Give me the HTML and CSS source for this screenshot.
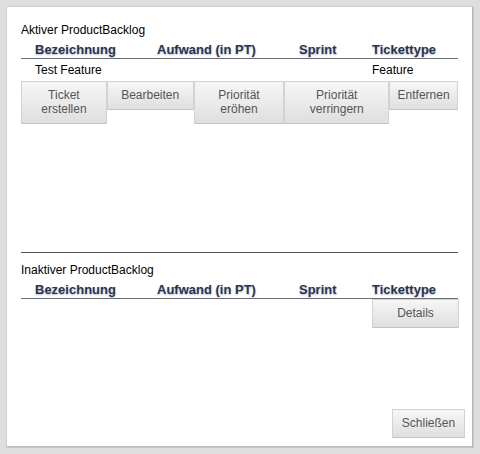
FILE: index.html
```html
<!DOCTYPE html>
<html>
<head>
<meta charset="utf-8">
<link rel="stylesheet" href="styles.css">
</head>
<body>
<div class="panel">
  <section class="backlog active">
    <div class="title">Aktiver ProductBacklog</div>
    <div class="grid head">
      <div>Bezeichnung</div><div>Aufwand (in PT)</div><div>Sprint</div><div>Tickettype</div>
    </div>
    <div class="grid row">
      <div>Test Feature</div><div></div><div></div><div>Feature</div>
    </div>
    <div class="actions">
      <button class="btn w1">Ticket erstellen</button>
      <button class="btn w2">Bearbeiten</button>
      <button class="btn w3">Priorität eröhen</button>
      <button class="btn w4">Priorität verringern</button>
      <button class="btn w5">Entfernen</button>
    </div>
  </section>
  <hr class="divider">
  <section class="backlog inactive">
    <div class="title">Inaktiver ProductBacklog</div>
    <div class="grid head">
      <div>Bezeichnung</div><div>Aufwand (in PT)</div><div>Sprint</div><div>Tickettype</div>
    </div>
    <div class="details-row">
      <button class="btn details">Details</button>
    </div>
  </section>
  <div class="footer">
    <button class="btn close">Schließen</button>
  </div>
</div>
</body>
</html>
```
FILE: styles.css
```css
html, body {
  margin: 0;
  padding: 0;
}
body {
  background: #dedede;
  font-family: "Liberation Sans", Arial, sans-serif;
  font-size: 12px;
  color: #000;
  padding: 6px;
  width: 480px;
  height: 454px;
  box-sizing: border-box;
}
.panel {
  box-sizing: border-box;
  width: 467px;
  height: 441px;
  background: #fff;
  border: 1px solid #cdcdcd;
  border-right-color: #b9b9b9;
  border-bottom-color: #b9b9b9;
  box-shadow: 1px 1px 0 #c6c6c6;
  padding: 16px 14px 0 14px;
  display: flex;
  flex-direction: column;
}
.backlog.active {
  height: 229px;
}
.title {
  line-height: 14px;
  height: 14px;
}
.grid {
  display: grid;
  grid-template-columns: 122px 142px 73px 100px;
}
.grid > div {
  padding-left: 14px;
}
.head {
  margin-top: 5px;
  font-size: 13px;
  font-weight: bold;
  color: #333;
  line-height: 16px;
  height: 16px;
  border-bottom: 1px solid #6e6e6e;
  text-shadow: 0 1px 2px rgba(90, 130, 255, 0.55);
}
.row {
  line-height: 14px;
  padding: 4px 0;
}
.actions {
  display: flex;
  align-items: flex-start;
}
.btn {
  box-sizing: border-box;
  font-family: "Liberation Sans", Arial, sans-serif;
  font-size: 12px;
  line-height: 14px;
  color: #555;
  padding: 6px 6px 7px;
  border: 1px solid #d2d2d2;
  border-bottom-color: #c4c4c4;
  border-radius: 0;
  background: linear-gradient(#f6f6f6, #dfdfdf);
  margin: 0;
  text-align: center;
}
.w1 { width: 86px; }
.w2 { width: 87px; }
.w3 { width: 91px; }
.w4 { width: 105px; }
.w5 { width: 69px; }
.divider {
  margin: 0;
  border: 0;
  height: 1px;
  background: #555;
  width: 437px;
}
.inactive {
  padding-top: 10px;
}
.details-row {
  display: flex;
  justify-content: flex-end;
}
.details {
  width: 87px;
  margin-right: -1px;
}
.footer {
  margin-top: auto;
  display: flex;
  justify-content: flex-end;
  padding-bottom: 8px;
  margin-right: -7px;
}
.close {
  width: 73px;
}
```
